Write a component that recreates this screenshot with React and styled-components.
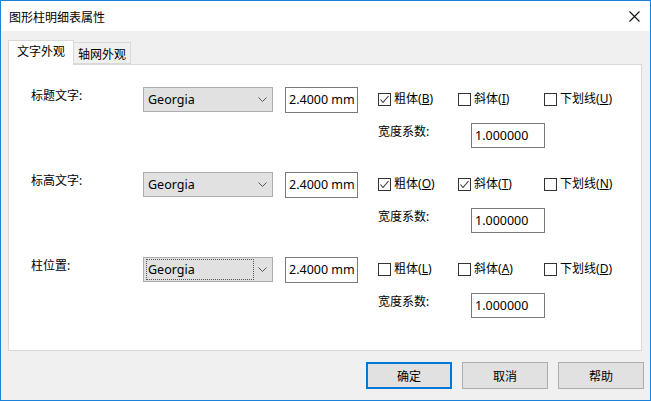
import styled, { createGlobalStyle } from 'styled-components';

const GlobalStyle = createGlobalStyle`
  html, body {
    margin: 0;
    padding: 0;
    background: #ffffff;
  }
  body {
    font-family: "Noto Sans", "Noto Sans CJK SC", sans-serif;
    font-size: 12px;
    color: #000;
  }
`;

const rows = [
  {
    label: '标题文字:',
    focused: false,
    checks: [
      { text: '粗体', key: 'B', checked: true },
      { text: '斜体', key: 'I', checked: false },
      { text: '下划线', key: 'U', checked: false },
    ],
  },
  {
    label: '标高文字:',
    focused: false,
    checks: [
      { text: '粗体', key: 'O', checked: true },
      { text: '斜体', key: 'T', checked: true },
      { text: '下划线', key: 'N', checked: false },
    ],
  },
  {
    label: '柱位置:',
    focused: true,
    checks: [
      { text: '粗体', key: 'L', checked: false },
      { text: '斜体', key: 'A', checked: false },
      { text: '下划线', key: 'D', checked: false },
    ],
  },
];

function CheckMark() {
  return (
    <svg width="11" height="11" viewBox="0 0 11 11">
      <polyline points="1.5,5.5 4,8.5 9.5,2" fill="none" stroke="#333" strokeWidth="1.1" />
    </svg>
  );
}

function Chevron() {
  return (
    <svg width="9" height="6" viewBox="0 0 9 6">
      <polyline points="0.5,0.5 4.5,4.5 8.5,0.5" fill="none" stroke="#555" strokeWidth="1" />
    </svg>
  );
}

function CloseIcon() {
  return (
    <svg width="11" height="11" viewBox="0 0 11 11">
      <path d="M0.5 0.5 L10.5 10.5 M10.5 0.5 L0.5 10.5" stroke="#111" strokeWidth="1.1" />
    </svg>
  );
}

export default function App() {
  return (
    <>
      <GlobalStyle />
      <Window>
        <TitleBar>
          <Title>图形柱明细表属性</Title>
          <CloseButton>
            <CloseIcon />
          </CloseButton>
        </TitleBar>
        <Body>
          <TabStrip>
            <Tab active>文字外观</Tab>
            <Tab>轴网外观</Tab>
          </TabStrip>
          <Panel>
            {rows.map((row) => (
              <Row key={row.label}>
                <Label>{row.label}</Label>
                <Select>
                  <SelectText focused={row.focused}>Georgia</SelectText>
                  <Chevron />
                </Select>
                <TextBox>2.4000 mm</TextBox>
                <Options>
                  {row.checks.map((c) => (
                    <CheckItem key={c.key}>
                      <Box>{c.checked && <CheckMark />}</Box>
                      <span>
                        {c.text}(<u>{c.key}</u>)
                      </span>
                    </CheckItem>
                  ))}
                  <WidthLabel>宽度系数:</WidthLabel>
                  <WidthBox>1.000000</WidthBox>
                </Options>
              </Row>
            ))}
          </Panel>
          <ButtonBar>
            <Button primary>确定</Button>
            <Button>取消</Button>
            <Button>帮助</Button>
          </ButtonBar>
        </Body>
      </Window>
    </>
  );
}

const Window = styled.div`
  width: 651px;
  height: 401px;
  box-sizing: border-box;
  border: 1px solid #1a82d8;
  display: flex;
  flex-direction: column;
  background: #f0f0f0;
`;

const TitleBar = styled.div`
  height: 30px;
  background: #ffffff;
  display: flex;
  align-items: center;
  justify-content: space-between;
  padding: 0 10px 0 8px;
`;

const Title = styled.div`
  font-size: 12px;
  padding-top: 1px;
`;

const CloseButton = styled.div`
  display: flex;
  align-items: center;
  padding-top: 1px;
`;

const Body = styled.div`
  flex: 1;
  display: flex;
  flex-direction: column;
  padding: 9px 8px 0 7px;
`;

const TabStrip = styled.div`
  display: flex;
  align-items: flex-end;
  height: 24px;
  position: relative;
  z-index: 1;
`;

const Tab = styled.div`
  box-sizing: border-box;
  height: ${(p) => (p.active ? '25px' : '22px')};
  margin-bottom: ${(p) => (p.active ? '-1px' : '0')};
  padding: ${(p) => (p.active ? '3px 8px 0 8px' : '4px 4px 0 4px')};
  background: ${(p) => (p.active ? '#ffffff' : '#f0f0f0')};
  border: 1px solid #d9d9d9;
  border-bottom: ${(p) => (p.active ? 'none' : '1px solid #d9d9d9')};
  border-left: ${(p) => (p.active ? '1px solid #d9d9d9' : 'none')};
  line-height: 16px;
`;

const Panel = styled.div`
  box-sizing: border-box;
  height: 287px;
  background: #ffffff;
  border: 1px solid #d9d9d9;
  padding: 22px 0 0 22px;
  display: flex;
  flex-direction: column;
  gap: 24px;
`;

const Row = styled.div`
  display: grid;
  grid-template-columns: 100px 130px 73px auto;
  column-gap: 12px;
  align-items: start;
`;

const Label = styled.div`
  padding-top: 1px;
  line-height: 16px;
`;

const Select = styled.div`
  box-sizing: border-box;
  height: 25px;
  background: #e1e1e1;
  border: 1px solid #adadad;
  display: flex;
  align-items: center;
  justify-content: space-between;
  padding: 0 5px 0 2px;
`;

const SelectText = styled.div`
  box-sizing: border-box;
  width: 108px;
  height: 21px;
  line-height: 19px;
  padding-left: 1px;
  font-size: 12.5px;
  border: 1px dotted ${(p) => (p.focused ? '#555' : 'transparent')};
`;

const TextBox = styled.div`
  box-sizing: border-box;
  height: 26px;
  background: #fff;
  border: 1px solid #7a7a7a;
  line-height: 24px;
  padding-left: 3px;
  font-size: 12.5px;
`;

const Options = styled.div`
  display: grid;
  grid-template-columns: 80px 86px auto;
  grid-template-rows: 26px 25px;
  row-gap: 10px;
  margin-left: 8px;
  align-items: center;
`;

const CheckItem = styled.label`
  display: flex;
  align-items: center;
  gap: 3px;
  line-height: 16px;
  margin-top: -2px;
`;

const Box = styled.span`
  box-sizing: border-box;
  width: 13px;
  height: 13px;
  border: 1px solid #333;
  background: #fff;
  display: flex;
  align-items: center;
  justify-content: center;
`;

const WidthLabel = styled.div`
  align-self: start;
  padding-top: 1px;
  line-height: 16px;
`;

const WidthBox = styled.div`
  box-sizing: border-box;
  width: 74px;
  height: 25px;
  margin-left: 13px;
  background: #fff;
  border: 1px solid #7a7a7a;
  line-height: 23px;
  padding-left: 3px;
  font-size: 12.5px;
`;

const ButtonBar = styled.div`
  display: flex;
  justify-content: flex-end;
  gap: 10px;
  margin-top: 11px;
  margin-right: -2px;
`;

const Button = styled.div`
  box-sizing: border-box;
  width: 86px;
  height: 27px;
  background: #e1e1e1;
  border: ${(p) => (p.primary ? '2px solid #0078d7' : '1px solid #adadad')};
  display: flex;
  align-items: center;
  justify-content: center;
`;
